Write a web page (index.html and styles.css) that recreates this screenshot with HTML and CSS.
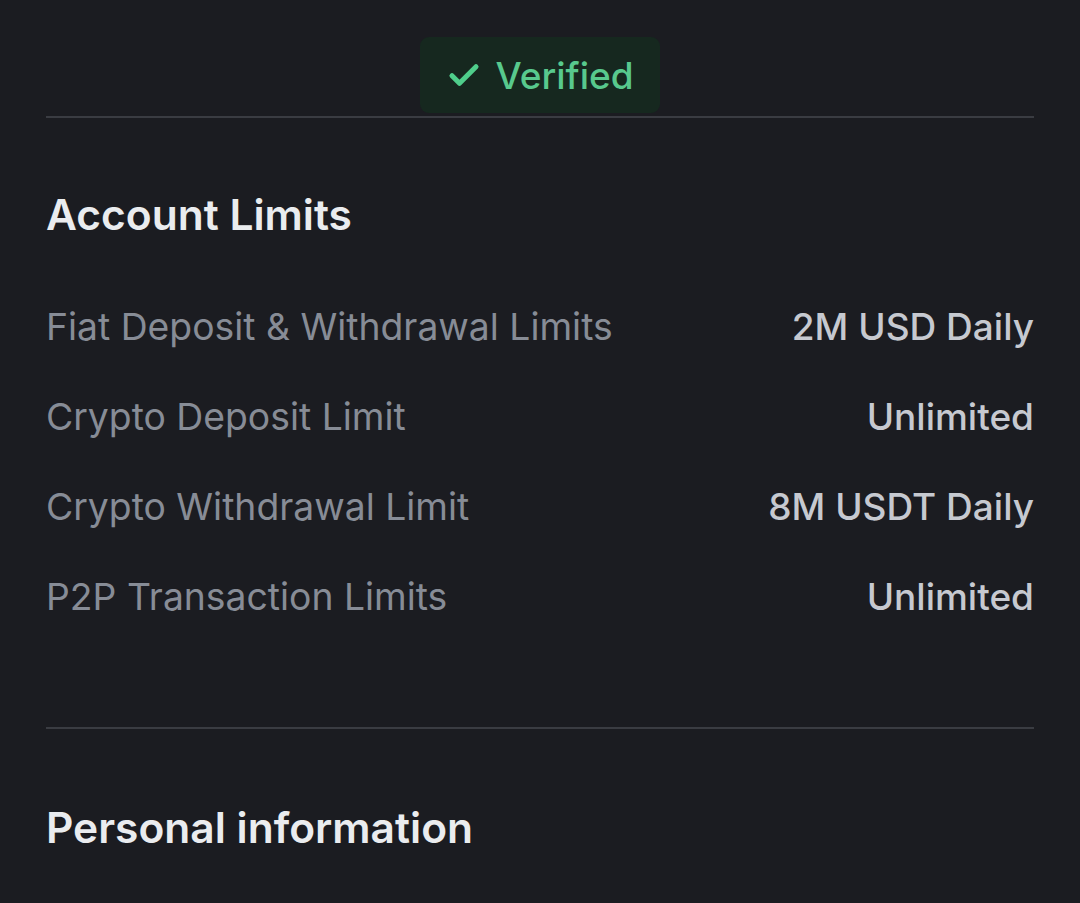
FILE: index.html
```html
<!DOCTYPE html>
<html lang="en">
<head>
  <meta charset="UTF-8">
  <meta name="viewport" content="width=device-width, initial-scale=1.0">
  <title>Account</title>
  <link rel="stylesheet" href="styles.css">
</head>
<body>
  <div class="container">
    <div class="status">
      <div class="badge">
        <svg class="check" viewBox="0 0 24 24" width="36" height="36" aria-hidden="true">
          <path d="M4 12.5l5 5L20 6.5" fill="none" stroke="#4fce8b" stroke-width="3.4" stroke-linecap="round" stroke-linejoin="round"/>
        </svg>
        <span>Verified</span>
      </div>
    </div>
    <hr class="divider">

    <section class="limits">
      <h2>Account Limits</h2>
      <div class="row">
        <span class="label">Fiat Deposit &amp; Withdrawal Limits</span>
        <span class="value">2M USD Daily</span>
      </div>
      <div class="row">
        <span class="label">Crypto Deposit Limit</span>
        <span class="value">Unlimited</span>
      </div>
      <div class="row">
        <span class="label">Crypto Withdrawal Limit</span>
        <span class="value">8M USDT Daily</span>
      </div>
      <div class="row">
        <span class="label">P2P Transaction Limits</span>
        <span class="value">Unlimited</span>
      </div>
    </section>

    <hr class="divider divider-bottom">

    <section class="personal">
      <h2>Personal information</h2>
    </section>
  </div>
</body>
</html>
```

FILE: styles.css
```css
* {
  box-sizing: border-box;
  margin: 0;
  padding: 0;
}
body {
  font-family: Inter, 'Noto Sans', Arial, sans-serif;
  background-color: #1b1c21;
  color: #eaecef;
  height: 903px;
  overflow: hidden;
}
.container {
  padding: 0 46px;
}
.status {
  display: flex;
  justify-content: center;
  padding-top: 37px;
}
.badge {
  display: flex;
  align-items: center;
  gap: 13px;
  height: 76px;
  width: 240px;
  justify-content: center;
  border-radius: 9px;
  background-color: #16281f;
  color: #58c98d;
  font-size: 37px;
  font-weight: 500;
}
.check {
  display: block;
}
.divider {
  border: none;
  height: 2px;
  background-color: #3a3c42;
  margin-top: 3px;
}
.limits h2,
.personal h2 {
  font-size: 42.5px;
  line-height: 56px;
  font-weight: 600;
  color: #eaecef;
}
.limits h2 {
  margin-top: 69px;
  margin-bottom: 38px;
}
.row {
  display: flex;
  justify-content: space-between;
  align-items: center;
  height: 90px;
}
.label {
  color: #878c96;
  font-size: 37.3px;
}
.value {
  color: #c6c9d0;
  font-weight: 500;
  font-size: 37px;
}
.divider-bottom {
  margin-top: 86px;
}
.personal h2 {
  margin-top: 71px;
}
```
